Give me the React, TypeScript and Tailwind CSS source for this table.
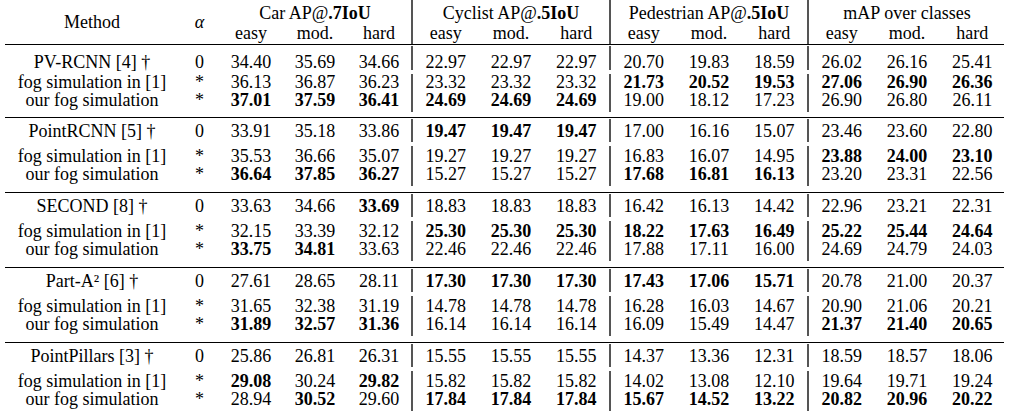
import React from "react";

type Block = { name: string; rows: string[] };

const blocks: Block[] = [
  {
    name: "PV-RCNN [4] †",
    rows: [
      "34.40 35.69 34.66 22.97 22.97 22.97 20.70 19.83 18.59 26.02 26.16 25.41",
      "36.13 36.87 36.23 23.32 23.32 23.32 !21.73 !20.52 !19.53 !27.06 !26.90 !26.36",
      "!37.01 !37.59 !36.41 !24.69 !24.69 !24.69 19.00 18.12 17.23 26.90 26.80 26.11",
    ],
  },
  {
    name: "PointRCNN [5] †",
    rows: [
      "33.91 35.18 33.86 !19.47 !19.47 !19.47 17.00 16.16 15.07 23.46 23.60 22.80",
      "35.53 36.66 35.07 19.27 19.27 19.27 16.83 16.07 14.95 !23.88 !24.00 !23.10",
      "!36.64 !37.85 !36.27 15.27 15.27 15.27 !17.68 !16.81 !16.13 23.20 23.31 22.56",
    ],
  },
  {
    name: "SECOND [8] †",
    rows: [
      "33.63 34.66 !33.69 18.83 18.83 18.83 16.42 16.13 14.42 22.96 23.21 22.31",
      "32.15 33.39 32.12 !25.30 !25.30 !25.30 !18.22 !17.63 !16.49 !25.22 !25.44 !24.64",
      "!33.75 !34.81 33.63 22.46 22.46 22.46 17.88 17.11 16.00 24.69 24.79 24.03",
    ],
  },
  {
    name: "Part-A² [6] †",
    rows: [
      "27.61 28.65 28.11 !17.30 !17.30 !17.30 !17.43 !17.06 !15.71 20.78 21.00 20.37",
      "31.65 32.38 31.19 14.78 14.78 14.78 16.28 16.03 14.67 20.90 21.06 20.21",
      "!31.89 !32.57 !31.36 16.14 16.14 16.14 16.09 15.49 14.47 !21.37 !21.40 !20.65",
    ],
  },
  {
    name: "PointPillars [3] †",
    rows: [
      "25.86 26.81 26.31 15.55 15.55 15.55 14.37 13.36 12.31 18.59 18.57 18.06",
      "!29.08 30.24 !29.82 15.82 15.82 15.82 14.02 13.08 12.10 19.64 19.71 19.24",
      "28.94 !30.52 29.60 !17.84 !17.84 !17.84 !15.67 !14.52 !13.22 !20.82 !20.96 !20.22",
    ],
  },
];

function Sep({ bar }: { bar: string }) {
  return (
    <div className="w-[2px] flex flex-col">
      <div className={`flex-1 bg-[#555] ${bar}`} />
    </div>
  );
}

function Val({ v, pad, w }: { v: string; pad: string; w: string }) {
  const bold = v.startsWith("!");
  const t = bold ? v.slice(1) : v;
  return <div className={`${w} text-center ${pad} ${bold ? "font-bold" : ""}`}>{t}</div>;
}

function Row({
  method,
  alpha,
  data,
  pad,
  bar,
}: {
  method: string;
  alpha: string;
  data: string;
  pad: string;
  bar: string;
}) {
  const c = data.split(" ");
  return (
    <div className="flex">
      <div className={`w-[184px] text-center ${pad}`}>{method}</div>
      <div className={`w-[31px] text-center ${pad}`}>{alpha}</div>
      <div className="w-[196px] pl-[4px] flex">
        {c.slice(0, 3).map((v, i) => (
          <Val key={i} v={v} pad={pad} w="w-[64px]" />
        ))}
      </div>
      <Sep bar={bar} />
      <div className="w-[196px] flex">
        {c.slice(3, 6).map((v, i) => (
          <Val key={i} v={v} pad={pad} w="flex-1" />
        ))}
      </div>
      <Sep bar={bar} />
      <div className="w-[196px] flex">
        {c.slice(6, 9).map((v, i) => (
          <Val key={i} v={v} pad={pad} w="flex-1" />
        ))}
      </div>
      <Sep bar={bar} />
      <div className="w-[196px] flex">
        {c.slice(9, 12).map((v, i) => (
          <Val key={i} v={v} pad={pad} w="flex-1" />
        ))}
      </div>
    </div>
  );
}

function GroupHead({ title, bold, wide }: { title: string; bold?: string; wide?: boolean }) {
  return (
    <div className={`w-[196px] flex flex-col ${wide ? "pl-[4px]" : ""}`}>
      <div className="pt-[4px] text-center leading-[18px]">
        {title}
        {bold && <span className="font-bold">{bold}</span>}
      </div>
      <div className="mt-[2px] flex leading-[18px]">
        <div className="flex-1 text-center">easy</div>
        <div className="flex-1 text-center">mod.</div>
        <div className="flex-1 text-center">hard</div>
      </div>
    </div>
  );
}

export default function App() {
  return (
    <div className="w-[1009px] h-[417px] overflow-hidden bg-white text-black font-['Liberation_Serif',serif] text-[18px] leading-[18px]">
      <div className="flex h-[44px]">
        <div className="w-[184px] flex items-center justify-center">Method</div>
        <div className="w-[31px] flex items-center justify-center italic">α</div>
        <GroupHead title="Car AP@" bold=".7IoU" wide />
        <Sep bar="" />
        <GroupHead title="Cyclist AP@" bold=".5IoU" />
        <Sep bar="" />
        <GroupHead title="Pedestrian AP@" bold=".5IoU" />
        <Sep bar="" />
        <GroupHead title="mAP over classes" />
      </div>
      {blocks.map((b, i) => {
        const first = i === 0;
        return (
          <React.Fragment key={i}>
            <div className="mx-[5px] h-px bg-black" />
            <div className={first ? "mt-[1px] mb-[5px]" : "mt-[1px] mb-[6px]"}>
              <Row
                method={b.name}
                alpha="0"
                data={b.rows[0]}
                pad={first ? "pt-[7px]" : "py-[3px]"}
                bar="mb-[1px]"
              />
              <div className="h-px" />
              <Row
                method="fog simulation in [1]"
                alpha="*"
                data={b.rows[1]}
                pad={first ? "pt-[1px]" : "pt-[3px]"}
                bar="mt-[2px]"
              />
              <Row method="our fog simulation" alpha="*" data={b.rows[2]} pad="pb-[3px]" bar="" />
            </div>
          </React.Fragment>
        );
      })}
    </div>
  );
}
